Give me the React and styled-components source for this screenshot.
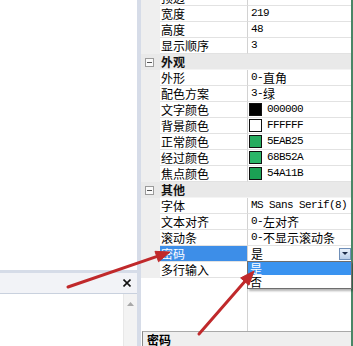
import React from 'react';
import styled, { createGlobalStyle } from 'styled-components';

const Global = createGlobalStyle`
  html, body { margin: 0; padding: 0; background: #fff; }
  body { font-family: "Noto Sans CJK SC", "Noto Sans", sans-serif; }
`;

const Screen = styled.div`
  position: relative;
  width: 353px;
  height: 346px;
  overflow: hidden;
  display: flex;
  background: #fff;
`;

const LeftPanel = styled.div`
  width: 137px;
  flex: none;
  display: flex;
  flex-direction: column;
`;

const LeftTop = styled.div`
  height: 270px;
  flex: none;
  background: #fff;
`;

const DockPanel = styled.div`
  flex: 1;
  min-height: 0;
  display: flex;
  flex-direction: column;
  border-top: 3px solid #d6dce8;
`;

const DockHeader = styled.div`
  height: 20px;
  flex: none;
  background: #f2f3f7;
  border-bottom: 1px solid #c9d1de;
  display: flex;
  align-items: center;
  justify-content: flex-end;
  padding-right: 6px;
`;

const DockBody = styled.div`
  flex: 1;
  display: flex;
  background: #fff;
`;

const DockContent = styled.div`
  flex: 1;
`;

const ScrollBar = styled.div`
  width: 14px;
  flex: none;
  background: #f3f3f3;
  border-left: 1px solid #e8e8e8;
  display: flex;
  justify-content: center;
  padding-top: 8px;
  box-sizing: border-box;
`;

const Splitter = styled.div`
  width: 4px;
  flex: none;
  background: #d6dce8;
`;

const RightPanel = styled.div`
  flex: 1;
  display: flex;
  flex-direction: column;
  border-right: 2px solid #4a8666;
  min-width: 0;
`;

const Grid = styled.div`
  height: 331px;
  flex: none;
  display: flex;
  flex-direction: column;
  position: relative;
`;

const Rows = styled.div`
  margin-top: -10px;
  display: flex;
  flex-direction: column;
`;

const Row = styled.div`
  display: grid;
  grid-template-columns: 19px 88px 1fr;
  height: 16px;
  background: ${(p) => (p.$category ? '#e9e9e9' : '#fff')};
`;

const Gutter = styled.div`
  background: ${(p) => (p.$category ? '#e9e9e9' : '#efefef')};
  display: flex;
  align-items: center;
  padding-left: 4px;
`;

const NameCell = styled.div`
  box-sizing: border-box;
  border-bottom: 1px solid #e2e2e2;
  border-right: 1px solid #d2d2d2;
  padding-left: 1px;
  font-size: 12px;
  line-height: 15px;
  white-space: nowrap;
  overflow: hidden;
  color: ${(p) => (p.$selected ? '#fff' : '#000')};
  background: ${(p) => (p.$selected ? '#3d8ee8' : '#fff')};
`;

const CategoryCell = styled.div`
  grid-column: 2 / 4;
  box-sizing: border-box;
  border-bottom: 1px solid #f4f4f4;
  padding-left: 1px;
  font-size: 12px;
  font-weight: 700;
  line-height: 15px;
  color: #111;
`;

const ValueCell = styled.div`
  position: relative;
  box-sizing: border-box;
  border-bottom: 1px solid #e2e2e2;
  padding-left: 3px;
  display: flex;
  align-items: center;
  font-size: 12px;
  line-height: 15px;
  white-space: nowrap;
  color: #000;
`;

const ValueText = styled.span`
  flex: 1;
  display: flex;
  align-items: center;
`;

const Cjk = styled.span`
  font-family: "Noto Sans CJK SC", sans-serif;
  font-size: 12px;
`;

const Latin = styled.span`
  font-family: "Liberation Mono", monospace;
  font-size: 11px;
  letter-spacing: -0.6px;
`;

const Swatch = styled.span`
  width: 11px;
  height: 11px;
  flex: none;
  border: 1px solid #111;
  margin-left: -2px;
  margin-right: 5px;
  background: ${(p) => p.$color};
`;

const ExpandBox = styled.span`
  width: 7px;
  height: 7px;
  border: 1px solid #9a9a9a;
  background: #fafafa;
  display: flex;
  align-items: center;
  justify-content: center;
  &::after {
    content: '';
    width: 5px;
    height: 1px;
    background: #555;
  }
`;

const DropButton = styled.span`
  width: 10px;
  height: 10px;
  flex: none;
  margin-right: 0;
  border: 1px solid #6f8fb8;
  background: linear-gradient(#eaf2fb, #b7cde8);
  display: flex;
  align-items: center;
  justify-content: center;
  &::after {
    content: '';
    border-left: 3px solid transparent;
    border-right: 3px solid transparent;
    border-top: 3px solid #1c2c48;
  }
`;

const DropList = styled.div`
  position: absolute;
  top: 100%;
  left: -1px;
  right: -1px;
  margin-top: 0;
  background: #fff;
  border: 1px solid #6e6e6e;
  box-shadow: 2px 2px 2px rgba(0, 0, 0, 0.3);
  z-index: 2;
`;

const DropItem = styled.div`
  height: 13px;
  line-height: 13px;
  padding-left: 2px;
  font-size: 12px;
  color: ${(p) => (p.$active ? '#fff' : '#000')};
  background: ${(p) => (p.$active ? '#3a93f0' : '#fff')};
`;

const Filler = styled.div`
  flex: 1;
  display: grid;
  grid-template-columns: 107px 1fr;
`;

const FillerLeft = styled.div`
  border-right: 1px solid #d2d2d2;
`;

const DescPane = styled.div`
  height: 40px;
  flex: none;
  background: #efefef;
  border-top: 1px solid #a9a9a9;
  border-left: 1px solid #8a8a8a;
  margin-left: 1px;
  padding-left: 4px;
  font-size: 12px;
  font-weight: 700;
  line-height: 15px;
  color: #000;
`;

const Overlay = styled.svg`
  position: absolute;
  left: 0;
  top: 0;
  pointer-events: none;
  z-index: 5;
`;

const rows = [
  { name: '顶边', value: '258' },
  { name: '宽度', value: '219' },
  { name: '高度', value: '48' },
  { name: '显示顺序', value: '3' },
  { cat: '外观' },
  { name: '外形', value: '0-直角' },
  { name: '配色方案', value: '3-绿' },
  { name: '文字颜色', color: '#000000', value: '000000' },
  { name: '背景颜色', color: '#ffffff', value: 'FFFFFF' },
  { name: '正常颜色', color: '#25ab5e', value: '5EAB25' },
  { name: '经过颜色', color: '#2ab568', value: '68B52A' },
  { name: '焦点颜色', color: '#1ba154', value: '54A11B' },
  { cat: '其他' },
  { name: '字体', value: 'MS Sans Serif(8)' },
  { name: '文本对齐', value: '0-左对齐' },
  { name: '滚动条', value: '0-不显示滚动条' },
  { name: '密码', value: '是', selected: true },
  { name: '多行输入', value: '' },
];

function Mixed({ text }) {
  const parts = text.match(/[\u4e00-\u9fff]+|[^\u4e00-\u9fff]+/g) || [];
  return parts.map((p, i) =>
    /[\u4e00-\u9fff]/.test(p) ? <Cjk key={i}>{p}</Cjk> : <Latin key={i}>{p}</Latin>
  );
}

function Arrow({ x1, y1, x2, y2 }) {
  const dx = x2 - x1;
  const dy = y2 - y1;
  const len = Math.hypot(dx, dy);
  const ux = dx / len;
  const uy = dy / len;
  const L = 14;
  const W = 5.5;
  const bx = x2 - ux * L;
  const by = y2 - uy * L;
  const px = -uy;
  const py = ux;
  const pts = `${x2},${y2} ${bx + px * W},${by + py * W} ${bx - px * W},${by - py * W}`;
  return (
    <g fill="#c0292b" stroke="#c0292b">
      <line x1={x1} y1={y1} x2={bx + ux * 2} y2={by + uy * 2} strokeWidth="3" strokeLinecap="round" />
      <polygon points={pts} strokeWidth="1" strokeLinejoin="round" />
    </g>
  );
}

function PropRow({ row }) {
  if (row.cat) {
    return (
      <Row $category>
        <Gutter $category>
          <ExpandBox />
        </Gutter>
        <CategoryCell>{row.cat}</CategoryCell>
      </Row>
    );
  }
  return (
    <Row>
      <Gutter />
      <NameCell $selected={row.selected}>{row.name}</NameCell>
      <ValueCell>
        <ValueText>
          {row.color && <Swatch $color={row.color} />}
          <Mixed text={row.value} />
        </ValueText>
        {row.selected && (
          <>
            <DropButton />
            <DropList>
              <DropItem $active>是</DropItem>
              <DropItem>否</DropItem>
            </DropList>
          </>
        )}
      </ValueCell>
    </Row>
  );
}

export default function App() {
  return (
    <>
      <Global />
      <Screen>
        <LeftPanel>
          <LeftTop />
          <DockPanel>
            <DockHeader>
              <svg width="8" height="8" viewBox="0 0 8 8">
                <path d="M0.5 0.5 L7.5 7.5 M7.5 0.5 L0.5 7.5" stroke="#111" strokeWidth="1.6" />
              </svg>
            </DockHeader>
            <DockBody>
              <DockContent />
              <ScrollBar>
                <svg width="7" height="4" viewBox="0 0 7 4">
                  <polygon points="3.5,0 7,4 0,4" fill="#a8a8a8" />
                </svg>
              </ScrollBar>
            </DockBody>
          </DockPanel>
        </LeftPanel>
        <Splitter />
        <RightPanel>
          <Grid>
            <Rows>
              {rows.map((r, i) => (
                <PropRow key={i} row={r} />
              ))}
            </Rows>
            <Filler>
              <FillerLeft />
              <div />
            </Filler>
          </Grid>
          <DescPane>密码</DescPane>
        </RightPanel>
        <Overlay width="353" height="346" viewBox="0 0 353 346">
          <Arrow x1={68} y1={287} x2={170} y2={252} />
          <Arrow x1={199} y1={334} x2={254} y2={271} />
        </Overlay>
      </Screen>
    </>
  );
}
